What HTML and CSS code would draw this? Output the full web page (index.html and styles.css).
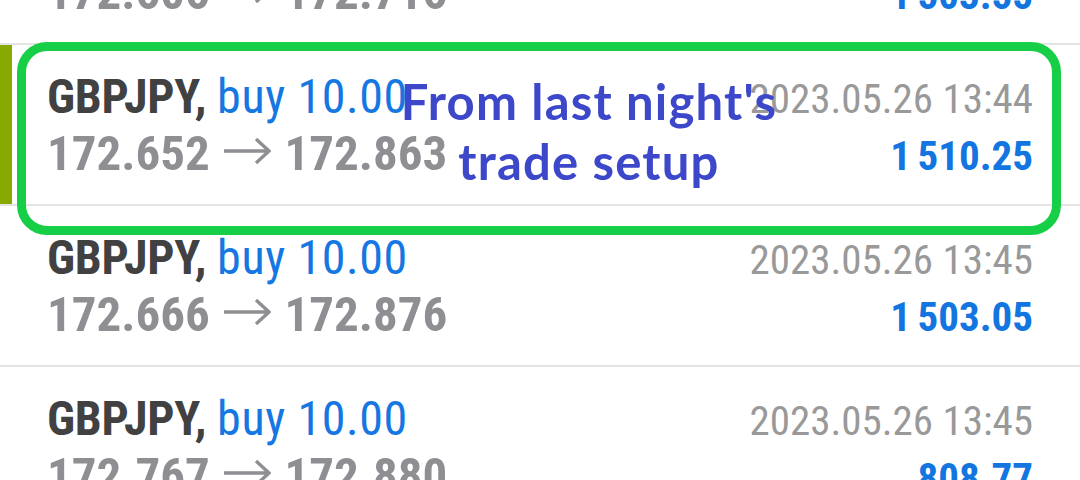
FILE: index.html
```html
<!DOCTYPE html>
<html lang="en">
<head>
  <meta charset="UTF-8" />
  <title>Trade history</title>
  <link rel="stylesheet" href="styles.css">
</head>
<body>
  <div class="screen">
    <ul class="trades">
      <li class="trade">
        <div class="col">
          <div class="line"><span class="symbol">GBPJPY,</span> <span class="side">buy 10.00</span></div>
          <div class="line prices">172.606 <svg class="arrow" viewBox="0 0 48 30"><path d="M1 15H46M33 3L46 15L33 27"/></svg> 172.716</div>
        </div>
        <div class="col right">
          <div class="line date">2023.05.26 13:44</div>
          <div class="line profit">1 503.55</div>
        </div>
      </li>
      <li class="trade selected">
        <div class="col">
          <div class="line"><span class="symbol">GBPJPY,</span> <span class="side">buy 10.00</span></div>
          <div class="line prices">172.652 <svg class="arrow" viewBox="0 0 48 30"><path d="M1 15H46M33 3L46 15L33 27"/></svg> 172.863</div>
        </div>
        <div class="col right">
          <div class="line date">2023.05.26 13:44</div>
          <div class="line profit">1 510.25</div>
        </div>
      </li>
      <li class="trade">
        <div class="col">
          <div class="line"><span class="symbol">GBPJPY,</span> <span class="side">buy 10.00</span></div>
          <div class="line prices">172.666 <svg class="arrow" viewBox="0 0 48 30"><path d="M1 15H46M33 3L46 15L33 27"/></svg> 172.876</div>
        </div>
        <div class="col right">
          <div class="line date">2023.05.26 13:45</div>
          <div class="line profit">1 503.05</div>
        </div>
      </li>
      <li class="trade">
        <div class="col">
          <div class="line"><span class="symbol">GBPJPY,</span> <span class="side">buy 10.00</span></div>
          <div class="line prices">172.767 <svg class="arrow" viewBox="0 0 48 30"><path d="M1 15H46M33 3L46 15L33 27"/></svg> 172.880</div>
        </div>
        <div class="col right">
          <div class="line date">2023.05.26 13:45</div>
          <div class="line profit">808.77</div>
        </div>
      </li>
    </ul>

    <!-- annotation drawn over the screenshot -->
    <div class="highlight"></div>
    <div class="note">From last night's<br>trade setup</div>
  </div>
</body>
</html>
```

FILE: styles.css
```css
body {
  margin: 0;
  background: #fff;
  font-family: 'Roboto', sans-serif;
  overflow: hidden;
}

.screen {
  position: relative;
  width: 1080px;
  height: 480px;
  overflow: hidden;
}

.trades {
  list-style: none;
  margin: -116px 0 0;
  padding: 0;
}

.trade {
  display: flex;
  justify-content: space-between;
  align-items: baseline;
  height: 136px;
  padding: 23px 47px 0 47px;
  border-bottom: 2px solid #e4e4e4;
}

.trade.selected {
  box-shadow: inset 12px 0 0 #88a900;
}

.line {
  font-size: 48px;
  line-height: 57px;
  white-space: nowrap;
  font-stretch: condensed;
}

.right {
  text-align: right;
}

.symbol {
  font-weight: 700;
  color: #414141;
  letter-spacing: -0.3px;
}

.side {
  color: #1677e2;
  letter-spacing: 0.6px;
}

.prices {
  font-size: 49px;
  font-weight: 700;
  color: #8f8f93;
}

.arrow {
  width: 48px;
  height: 30px;
  margin: 0 2px;
  vertical-align: 4px;
  fill: none;
  stroke: #8f8f93;
  stroke-width: 3.4;
}

.date {
  font-size: 41px;
  color: #999;
}

.profit {
  font-size: 41px;
  font-weight: 700;
  color: #1275e0;
  word-spacing: -3px;
}

.highlight {
  position: absolute;
  left: 17px;
  top: 42px;
  width: 1026px;
  height: 175px;
  border: 9px solid #17cf47;
  border-radius: 30px;
}

.note {
  position: absolute;
  left: 389px;
  top: 71px;
  width: 400px;
  text-align: center;
  font-family: 'Lato', sans-serif;
  font-size: 49px;
  font-weight: 700;
  letter-spacing: 1.2px;
  line-height: 60px;
  color: #3c47c9;
}
```
